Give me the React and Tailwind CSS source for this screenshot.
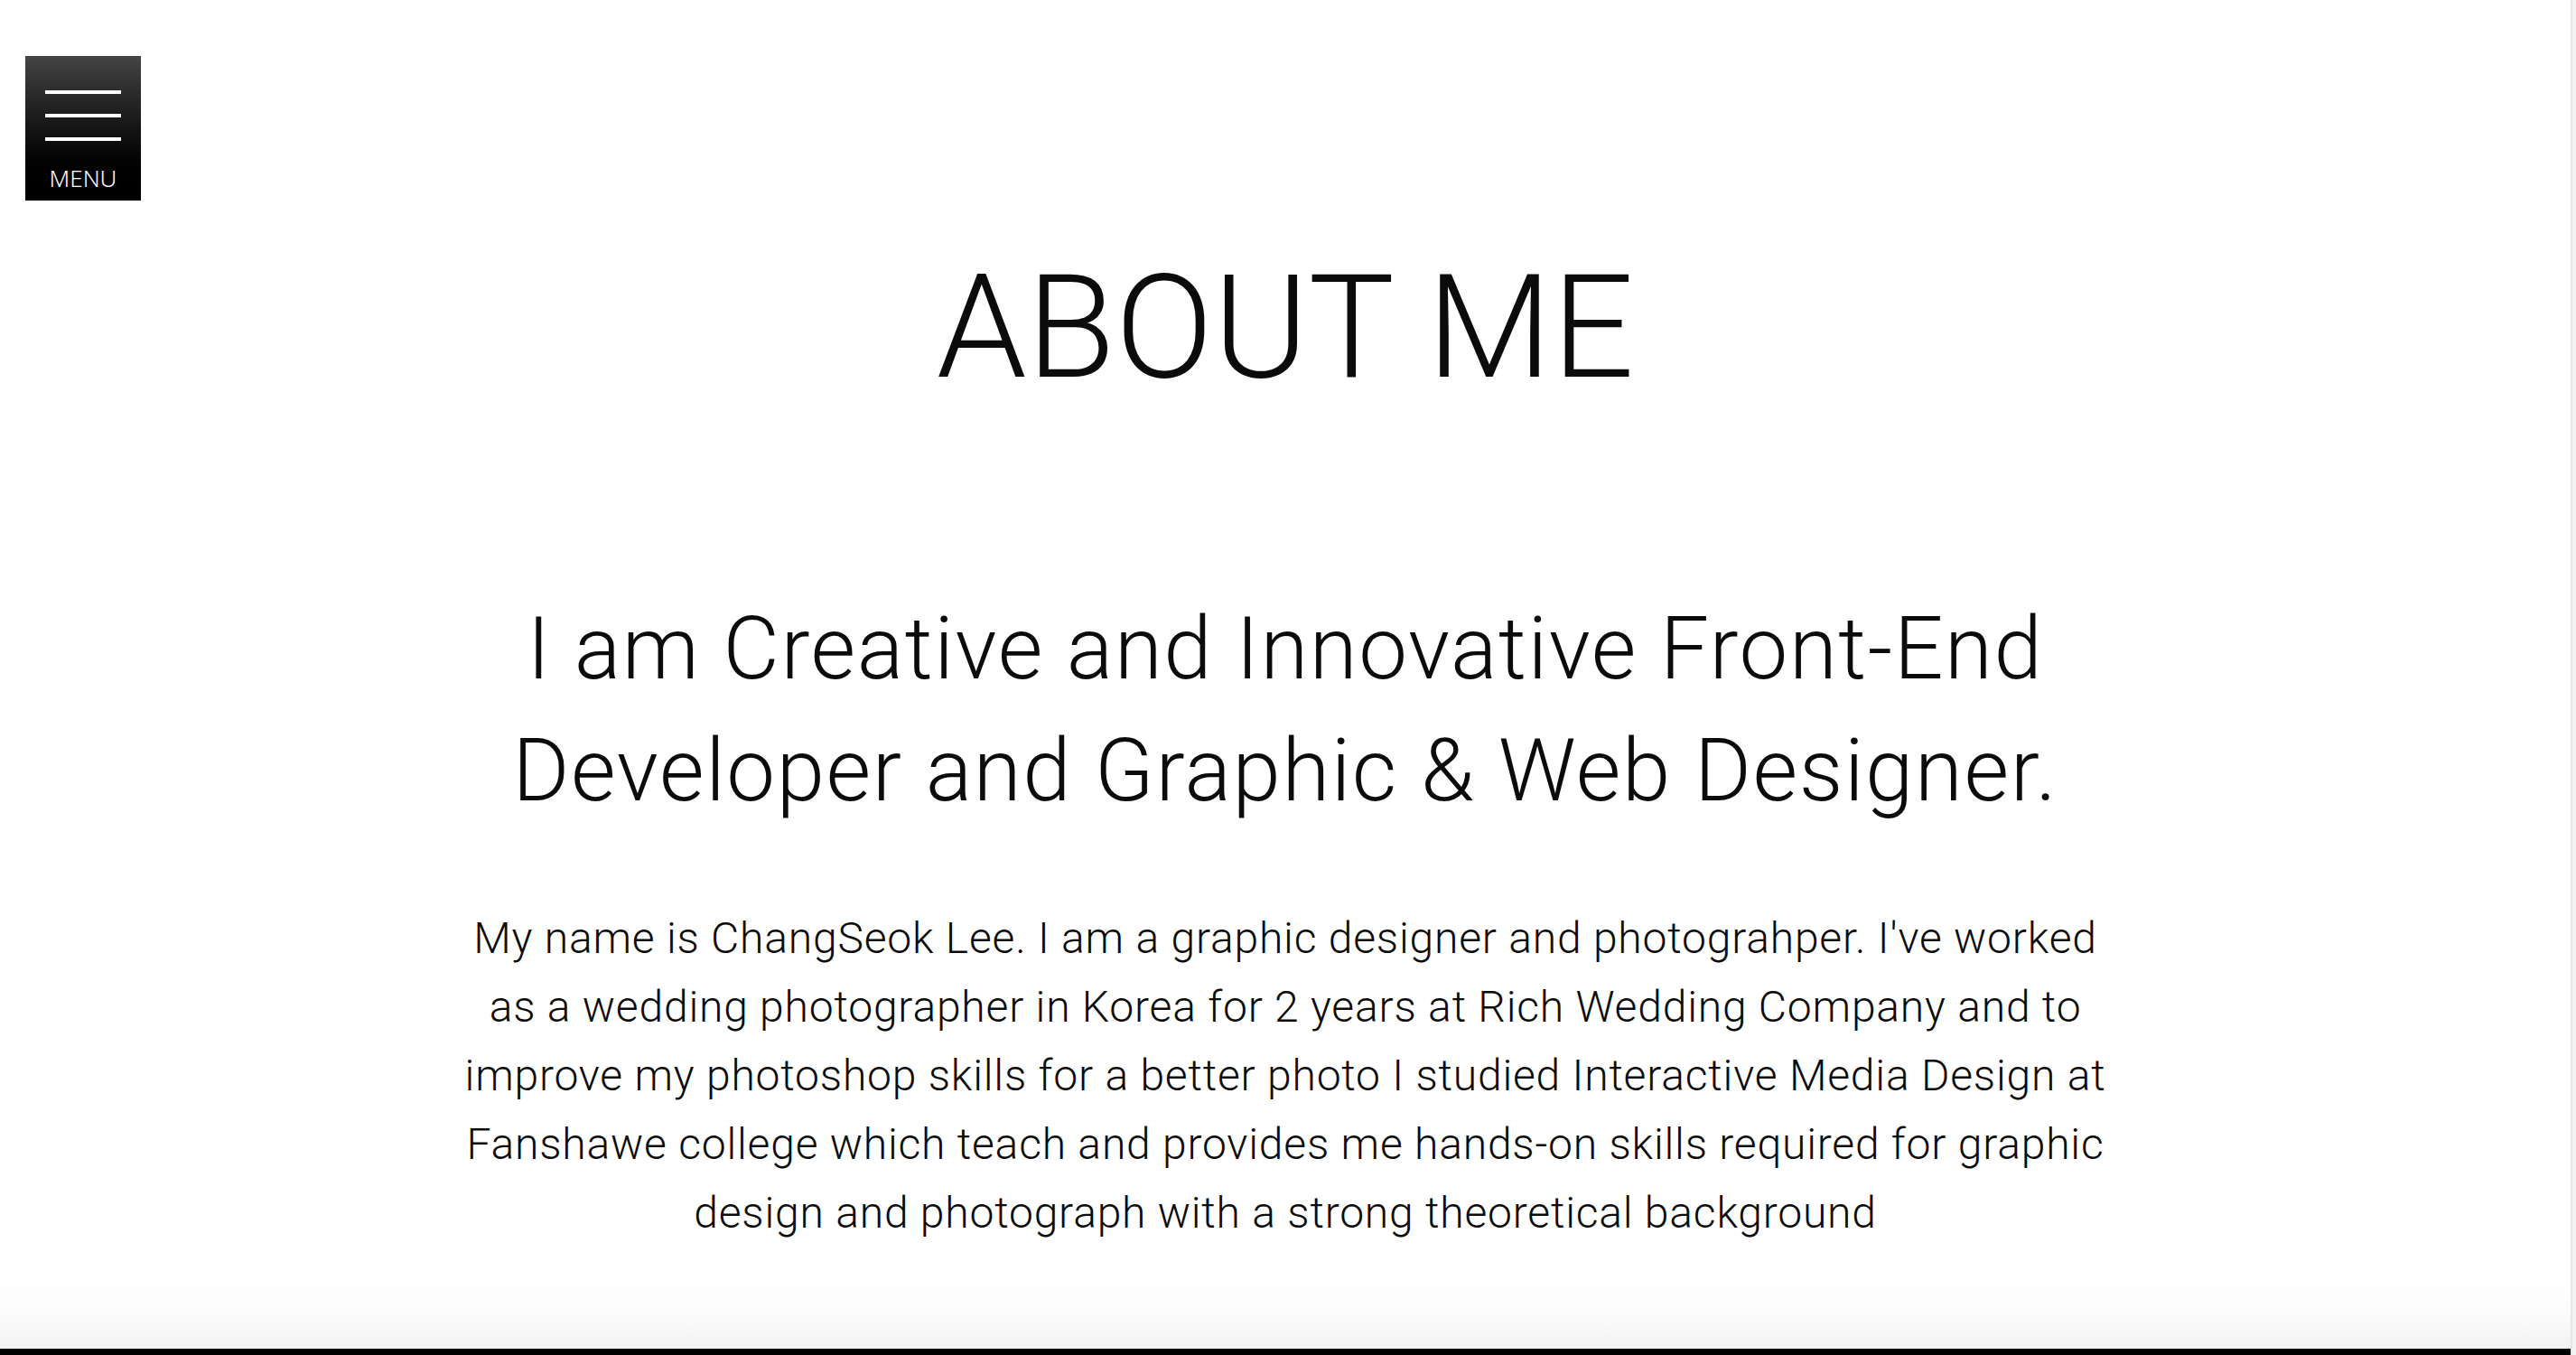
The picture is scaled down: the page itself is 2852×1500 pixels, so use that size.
import React from 'react';

function MenuButton() {
  return (
    <button className="fixed left-[28px] top-[62px] w-[128px] h-[160px] flex flex-col items-center pt-[38px] bg-gradient-to-b from-[#454545] to-[#000000] text-white">
      <span className="block w-[84px] h-[4px] bg-white" />
      <span className="block w-[84px] h-[4px] bg-white mt-[22px]" />
      <span className="block w-[84px] h-[4px] bg-white mt-[22px]" />
      <span className="mt-[28px] text-[26px] leading-none font-light font-['Noto_Sans',sans-serif]">MENU</span>
    </button>
  );
}

export default function App() {
  return (
    <div className="flex w-full bg-white text-[#0b0b0b] font-['Roboto',sans-serif]">
      <div className="flex-1 flex flex-col">
        <MenuButton />

        <section className="flex flex-col items-center pt-[283px] pb-[32px]">
          <h1 className="text-[160px] leading-none font-light">ABOUT ME</h1>

          <h2 className="mt-[208px] text-[96px] leading-[135px] font-light text-center tracking-[1.6px]">
            I am Creative and Innovative Front-End
            <br />
            Developer and Graphic &amp; Web Designer.
          </h2>

          <p className="mt-[80px] text-[48px] leading-[76px] font-light text-center tracking-[0.8px]">
            My name is ChangSeok Lee. I am a graphic designer and photograhper. I've worked
            <br />
            as a wedding photographer in Korea for 2 years at Rich Wedding Company and to
            <br />
            improve my photoshop skills for a better photo I studied Interactive Media Design at
            <br />
            Fanshawe college which teach and provides me hands-on skills required for graphic
            <br />
            design and photograph with a strong theoretical background
          </p>
        </section>

        <div className="h-[80px] bg-gradient-to-b from-white via-[#fcfcfc] to-[#f2f2f2]" />
        <footer className="h-[7px] bg-black" />
      </div>
      <div className="w-[6px] shrink-0 border-l-2 border-[#e6e6e6] bg-[#f4f4f4]" />
    </div>
  );
}
